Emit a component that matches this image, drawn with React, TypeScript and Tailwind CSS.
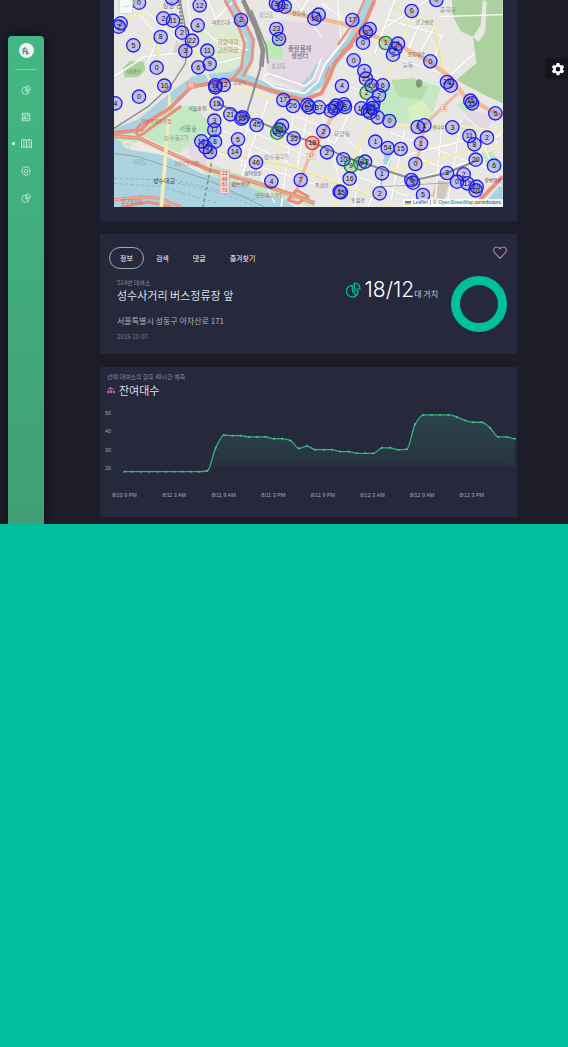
import React from "react";

type Marker = [x: number, y: number, label: string, tone?: "green" | "red"];

const markers: Marker[] = [
  [93, 8, "0"], [192, -6, "5"], [275, 16, "12"], [166, 55, "2"], [195, 62, "11"], [269, 76, "4"],
  [399, 60, "2"], [38, 70, "2"], [32, 80, "2"], [222, 98, "2"], [252, 122, "22"], [158, 111, "8"],
  [76, 136, "5"], [232, 153, "3"], [298, 152, "11"], [271, 202, "6"], [305, 192, "9"],
  [146, 203, "0"], [169, 257, "10"], [93, 290, "0"], [22, 310, "4"], [322, 262, "2"],
  [322, 256, "18"], [347, 255, "12"], [326, 311, "15"], [504, 10, "3"], [511, 15, "6"],
  [530, 20, "12"], [619, 56, "19"], [632, 44, "4"], [733, 60, "17"], [505, 87, "23"],
  [513, 117, "50"], [785, 87, "1"], [774, 97, "0"], [765, 128, "0"], [737, 181, "0"],
  [769, 213, "1"], [774, 236, "25"], [702, 258, "4"], [791, 257, "19"], [776, 278, "2", "green"],
  [824, 256, "6"], [813, 286, "2"], [911, 33, "6"], [985, 0, "0"], [833, 129, "1", "green"],
  [870, 131, "4"], [855, 164, "3"], [862, 146, "8"], [967, 184, "0"], [1028, 257, "5"],
  [1017, 246, "28"], [1087, 302, "11"], [1092, 310, "11"], [1162, 340, "5"], [526, 300, "17"],
  [555, 318, "26"], [598, 315, "15"], [603, 322, "61"], [633, 322, "37"], [669, 332, "23"],
  [680, 324, "3"], [685, 317, "8"], [708, 313, "6"], [711, 321, "0"], [760, 325, "14"],
  [796, 310, "4"], [794, 324, "25"], [780, 332, "8"], [786, 338, "0"], [809, 352, "0"],
  [844, 363, "0"], [367, 343, "21"], [400, 356, "15"], [404, 352, "13"], [319, 362, "3"],
  [319, 390, "17"], [280, 424, "18"], [292, 441, "15"], [321, 425, "8"], [306, 456, "16"],
  [390, 418, "5"], [380, 456, "14"], [446, 375, "45"], [522, 377, "2"], [514, 389, "35"],
  [508, 398, "44", "green"], [557, 415, "35"], [613, 429, "18", "red"], [646, 394, "2"],
  [657, 457, "2"], [706, 478, "10"], [729, 498, "9", "green"], [757, 490, "4", "green"],
  [771, 485, "12"], [725, 536, "16"], [695, 575, "1"], [699, 577, "15"], [444, 487, "46"],
  [490, 544, "4"], [578, 540, "7"], [929, 381, "0"], [949, 376, "1"], [1033, 382, "3"],
  [1084, 408, "11"], [1099, 433, "8"], [1137, 413, "2"], [802, 425, "1"], [839, 444, "54"],
  [878, 447, "15"], [939, 430, "1"], [922, 492, "0"], [822, 520, "1"], [910, 540, "6"],
  [915, 548, "9"], [1017, 519, "3"], [1067, 523, "2"], [1047, 545, "0"], [1078, 550, "12"],
  [1106, 560, "19"], [1103, 571, "10"], [1103, 479, "20"], [1158, 497, "6"], [815, 580, "2"],
  [945, 585, "5"],
];

const minorRoads = [
  "M18 60L120 0M18 230L110 170L210 160M60 0L150 110L120 190M240 0L255 130L305 240M300 0L330 70L380 60",
  "M110 30L220 130M320 120L420 150M330 190L410 170M270 70L340 140M380 0L320 60",
  "M340 390L560 500M370 330L500 610M430 300L400 500M330 460L640 560M480 300L390 560M330 350L620 480",
  "M560 320L520 620M600 340L560 540M640 330L700 560M540 340L690 400M530 370L680 430M530 400L690 460",
  "M640 110L560 0M700 130L690 0M600 0L570 50M730 70L640 10M820 90L960 0M800 160L860 0M700 250L830 300",
  "M840 60L1010 110M900 80L860 170M940 60L900 150M980 80L940 150M1000 110L980 180M850 170L1000 220",
  "M850 400L1180 520M890 390L850 600M1000 390L980 620M1060 360L1020 600M880 470L1080 420M860 560L1100 480",
  "M1000 50L1184 44M1010 240L1100 160M760 440L740 620M700 510L900 590M860 450L780 620M940 480L1170 560",
  "M1110 450L1180 400M1130 440L1180 560M1070 350L1170 430M700 400L780 480M720 350L680 430",
];

const mapLabels: [number, number, string, number, string][] = [
  [190, 24, "성동구", 19, "#777"], [78, 218, "대현산", 15, "#5b8a4a"], [575, 152, "중랑물재", 19, "#665f6e"],
  [575, 175, "생센터", 19, "#665f6e"], [475, 50, "용답동", 16, "#999"], [512, 205, "송정동", 16, "#999"],
  [360, 133, "한양대학", 17, "#b08a50"], [360, 155, "고산자로", 17, "#b08a50"], [268, 330, "서울숲길", 15, "#555"],
  [240, 393, "서울숲", 19, "#6a9b77"], [205, 420, "성수동1가", 18, "#999"], [95, 492, "저자도", 16, "#7aa3c4"],
  [145, 368, "강변북로분기점", 14, "#c0504d"], [235, 495, "고산로분기점", 14, "#c0504d"],
  [168, 550, "성수대교", 18, "#444"], [72, 610, "압구정진입", 14, "#c0504d"], [398, 558, "강변북로", 15, "#7a3030"],
  [435, 526, "성덕정길", 14, "#555"], [505, 478, "성수동2가", 18, "#999"], [485, 590, "영동대교 북단", 15, "#c0504d"],
  [702, 407, "화양동", 18, "#999"], [642, 562, "뚝섬로", 15, "#666"], [750, 605, "동일로", 15, "#666"],
  [900, 202, "능동", 17, "#999"], [1020, 35, "중곡동", 18, "#999"], [950, 72, "긴고랑로", 14, "#666"],
  [991, 388, "광나루", 14, "#666"], [925, 168, "천호대로", 14, "#555"], [572, 46, "천호대", 14, "#666"],
  [340, 73, "마장로1길", 13, "#666"], [395, 252, "살곶이", 14, "#777"], [1155, 545, "강변북로", 14, "#7a3030"],
];

function CityMap() {
  return (
    <svg viewBox="18 0 1167 621" className="block h-auto w-full" role="img" aria-label="지도">
      <rect x="18" width="1167" height="621" fill="#e9e7e4" />
      {/* parks and zones */}
      <g fill="#add19e">
        <path d="M1032 0H1184V310L1130 285L1045 240L1105 190L1095 110L1060 95L1035 50Z" />
        <path d="M45 205L65 183L108 185L112 210L90 232L50 232Z" />
        <path d="M1125 0L1136 5L1132 95L1112 125L1095 110L1118 75Z" fill="#e9e7e4" />
      </g>
      <g fill="#c4e8c4">
        <path d="M835 250L915 232L1000 262L985 300L965 375L860 368L800 330Z" />
        <path d="M190 320L260 318L330 400L290 470L235 440L215 460L110 410L90 390L165 335Z" />
        <path d="M260 80L380 75L425 165L395 230L310 225L290 140Z" fill="#dde9d0" />
        <path d="M465 120L525 125L525 180L475 178Z" fill="#bfe8b8" />
        <path d="M1045 315L1095 290L1110 325L1080 345Z" />
        <path d="M1120 460L1150 455L1184 490V510L1140 500Z" />
        <path d="M30 0L90 0L70 40L35 35Z" />
        <path d="M18 398L60 395L110 410L60 445L18 410Z" />
        <path d="M250 475L330 500L620 600L620 621L520 600L300 530Z" />
      </g>
      <g fill="#e3d8e4">
        <path d="M510 60L700 75L705 110L655 190L640 235L590 275L480 230L475 180L530 175Z" />
        <path d="M240 430L300 405L320 480L300 500L245 465Z" />
        <path d="M1090 330L1155 345L1140 390L1080 400L1050 375Z" />
        <path d="M205 120L240 120L240 165L195 160Z" fill="#ddd0ca" />
      </g>
      <path d="M850 240L915 235L960 260L940 300L870 290Z" fill="#b5dcaa" />
      <path d="M900 320L945 300L975 340L950 372L905 370Z" fill="#d8efc0" />
      <path d="M985 540L1025 548L1010 600L970 590Z" fill="#d0cabd" />
      <path d="M830 455L855 450L845 500L825 490Z" fill="#aad3df" />
      <path d="M924 243l8-6 9 4 3 8-4 11-9 4-7-7Z" fill="#667b66" opacity=".7" />
      <path d="M605 230L625 190L632 198L610 240ZM580 255L600 230L608 236L590 262Z" fill="#a6d2df" />
      {/* rivers */}
      <path d="M18 412L70 450L170 465L280 520L430 565L530 600L560 621H18Z" fill="#aad3df" />
      <path d="M1184 545L1120 621H1184Z" fill="#aad3df" />
      <g fill="none" stroke="#aad3df" strokeLinejoin="round">
        <path d="M18 400L95 370L195 288L260 240L390 225L490 268L580 288L640 245L665 200L730 120L790 0" strokeWidth="26" />
        <path d="M360 0L395 60L430 120L420 190L380 225" strokeWidth="24" />
        <path d="M465 238L500 262L590 280L630 245L650 195L710 120" stroke="#fff" strokeWidth="5" />
        <path d="M465 230L480 220L590 258L615 238L640 175" stroke="#fff" strokeWidth="4" />
      </g>
      <g stroke="#7da0d8" strokeWidth="2" fill="none" strokeDasharray="9 7">
        <path d="M18 535L170 540L340 580L450 621M18 550L160 560L330 610M200 540L450 600" />
      </g>
      {/* streets */}
      <g fill="none" stroke="#fff" strokeWidth="4">
        {minorRoads.map((d) => <path key={d} d={d} />)}
      </g>
      <g fill="none" stroke="#d2cfca" strokeWidth="1">
        {minorRoads.map((d) => <path key={d} d={d} transform="translate(3 3)" />)}
      </g>
      <g fill="none" stroke="#f2edb8" strokeWidth="8" strokeLinejoin="round">
        <path d="M148 105L155 220L185 290L178 400L160 621M40 150L140 112M18 75L110 30M205 40L250 120L305 240L300 510" />
        <path d="M860 20L980 75L1010 215M915 0L890 110L850 200L790 350L725 520L680 621M340 250L540 305L790 325" />
        <path d="M330 455L560 500L800 590L850 621M520 400L495 540M850 378L1070 380L1184 395M820 520L1184 430" />
      </g>
      <g fill="none" stroke="#c9c38a" strokeWidth="1">
        <path d="M143 105L150 220L180 290M855 20L975 75L1005 215M335 455L560 505L800 595M850 383L1070 385" />
      </g>
      <g fill="none" strokeLinejoin="round">
        <path d="M530 35L700 70L880 140L965 185L1030 235L1070 290L1184 350" stroke="#f0bc9b" strokeWidth="13" />
        <path d="M1050 280L1000 325L950 375L925 490M700 300L640 410L600 480L555 600" stroke="#efbda5" strokeWidth="10" />
        <path d="M375 0L405 55L436 120L432 180L405 230M350 0L385 62L410 130L400 205L370 240" stroke="#e49784" strokeWidth="9" />
        <path d="M18 408L95 415L200 465L300 508L450 550L570 590L620 610M18 398L100 390L120 365L185 325L250 260L380 238L480 268L585 300L640 280L665 230L680 190L730 130L770 70L800 0" stroke="#e6917d" strokeWidth="12" />
        <path d="M690 135L745 55L770 0M665 200L650 235M700 150L720 150L735 135" stroke="#e49784" strokeWidth="7" />
        <path d="M18 600L100 590L155 595L220 621M40 621L120 606L190 621M540 600L565 570L600 590L570 610ZM100 370C70 400 90 420 120 390L220 318" stroke="#e6917d" strokeWidth="9" />
        <path d="M18 600L100 590L155 595L220 621M18 408L95 415L200 465L450 550L620 610" stroke="#f7c8b9" strokeWidth="2" />
        <path d="M1184 530L1095 621" stroke="#e6917d" strokeWidth="12" />
        <path d="M60 445C30 425 55 420 75 432L170 465L260 505" stroke="#f1ece4" strokeWidth="5" />
      </g>
      {/* railways */}
      <g fill="none" stroke="#8d8d8d" strokeLinejoin="round">
        <path d="M405 0L445 85L465 150L460 200" strokeWidth="14" />
        <path d="M430 30L475 140L480 190" strokeWidth="5" />
        <path d="M458 200L415 345M330 310L405 345L510 390L615 428L710 470L920 540L1017 519L1110 480" strokeWidth="6" />
        <path d="M215 0L228 60L240 130L232 190L190 255L120 320L18 385" strokeWidth="4" />
        <path d="M215 0L222 75" strokeWidth="10" strokeDasharray="7 4" />
        <path d="M310 490L285 621" strokeWidth="5" strokeDasharray="10 8" />
        <path d="M820 520L820 560L1030 548M18 460L90 470L300 540L470 621" strokeWidth="2" />
      </g>
      <path d="M178 400L160 621" fill="none" stroke="#f2edb8" strokeWidth="11" />
      <g fontFamily="'Noto Sans CJK KR', sans-serif" textAnchor="middle">
        {mapLabels.map(([x, y, text, size, fill]) => (
          <text key={`${x}-${y}`} x={x} y={y} fontSize={size} fill={fill}>{text}</text>
        ))}
      </g>
      {/* road number shields */}
      <g fontFamily="'Liberation Sans', sans-serif" fontSize="14" textAnchor="middle">
        <rect x="336" y="510" width="28" height="70" fill="#f7d3c8" stroke="#d98a76" />
        {["23", "46", "61", "70"].map((n, i) => (
          <text key={n} x="350" y={525 + i * 17} fill="#9c4a40">{n}</text>
        ))}
        <rect x="236" y="247" width="26" height="19" fill="#f39a85" />
        <text x="249" y="262" fill="#fff">61</text>
        <rect x="596" y="460" width="26" height="19" fill="#f9dcc6" stroke="#d9a27e" />
        <text x="609" y="475" fill="#a5673c">47</text>
        <rect x="999" y="315" width="18" height="19" fill="#f9dcc6" stroke="#d9a27e" />
        <text x="1008" y="330" fill="#a5673c">3</text>
      </g>
      <g fontFamily="'Liberation Sans', sans-serif" fontSize="21" textAnchor="middle">
        {markers.map(([x, y, label, tone], i) => {
          const color = tone === "green" ? "#158a2a" : tone === "red" ? "#e23434" : "#2020ee";
          return (
            <g key={i}>
              <circle cx={x} cy={y} r="20" fill={color} fillOpacity=".2" stroke={color} strokeWidth="4" />
              <text x={x} y={y + 7} fill="#151515">{label}</text>
            </g>
          );
        })}
      </g>
    </svg>
  );
}

const levels = [
  18, 18, 18, 18, 18, 18, 18, 18, 18, 18, 18.5, 31, 38, 37.7, 37.7, 37, 37, 37, 36, 36, 35, 30.7, 32,
  30, 30, 30, 29, 29, 28, 28, 28, 31, 31, 30, 30.3, 44, 49, 49, 49, 49, 48, 46, 45, 45, 42, 37, 37, 36,
];

function buildCurve(points: [number, number][]) {
  const slopes = points.map((p, i) => {
    if (i === 0 || i === points.length - 1) return 0;
    const before = (p[1] - points[i - 1][1]) / (p[0] - points[i - 1][0]);
    const after = (points[i + 1][1] - p[1]) / (points[i + 1][0] - p[0]);
    return before * after <= 0 ? 0 : (2 * before * after) / (before + after);
  });
  let d = `M${points[0][0]} ${points[0][1]}`;
  for (let i = 1; i < points.length; i++) {
    const [x0, y0] = points[i - 1];
    const [x1, y1] = points[i];
    const third = (x1 - x0) / 3;
    d += `C${x0 + third} ${y0 + slopes[i - 1] * third} ${x1 - third} ${y1 - slopes[i] * third} ${x1} ${y1}`;
  }
  return d;
}

function ForecastChart() {
  const points = levels.map((v, i): [number, number] => [24.3 + i * 8.31, 69 - (v - 20) * 1.83]);
  const curve = buildCurve(points);
  const times = ["8/10 9 PM", "8/11 3 AM", "8/11 9 AM", "8/11 3 PM", "8/11 9 PM", "8/12 3 AM", "8/12 9 AM", "8/12 3 PM"];
  return (
    <svg viewBox="0 0 417 104" className="block h-auto w-full" role="img" aria-label="잔여대수 예측">
      <defs>
        <linearGradient id="area" x1="0" y1="12" x2="0" y2="72" gradientUnits="userSpaceOnUse">
          <stop offset="0" stopColor="#42b983" stopOpacity=".2" />
          <stop offset=".5" stopColor="#42b983" stopOpacity=".14" />
          <stop offset=".92" stopColor="#42b983" stopOpacity=".07" />
          <stop offset=".93" stopColor="#42b983" stopOpacity="0" />
        </linearGradient>
      </defs>
      <path d={`${curve}V72H24Z`} fill="url(#area)" />
      <path d={curve} fill="none" stroke="#36b07b" strokeWidth="1.3" />
      {points.map(([x, y], i) => <circle key={i} cx={x} cy={y} r="1" fill="#42c78c" />)}
      <g fontFamily="'Liberation Sans', sans-serif" fontSize="5.4" fill="#a8a9b3" textAnchor="middle">
        {[50, 40, 30, 20].map((n) => <text key={n} x="8" y={16 + (50 - n) * 1.83}>{n}</text>)}
        {times.map((t, i) => <text key={t} x={24.5 + i * 49.6} y="98">{t}</text>)}
      </g>
    </svg>
  );
}

const outline = { fill: "none", stroke: "currentColor", strokeWidth: 1.8, strokeLinejoin: "round" as const };

function PieIcon({ className }: { className: string }) {
  return (
    <svg viewBox="0 0 24 24" className={className} {...outline} aria-hidden="true">
      <path d="M11 5A8.800 8.800 0 1 0 19.800 13.500H11Z" />
      <path d="M14 1.500A8.500 8.500 0 0 1 22.500 10.500H14ZM11 13.500L17 20" />
    </svg>
  );
}

function PhotoIcon({ className }: { className: string }) {
  return (
    <svg viewBox="0 0 24 24" className={className} {...outline} aria-hidden="true">
      <path d="M3 3h18v18H3ZM3 7h18M7 11h5v4H7ZM3 18l6-2 4 2 4-3 4 2M15 11h3" />
    </svg>
  );
}

function MapIcon({ className }: { className: string }) {
  return (
    <svg viewBox="0 0 24 24" className={className} {...outline} aria-hidden="true">
      <path d="M1 5l5.500-2L12 5l5.500-2L23 5v16l-5.500-2L12 21l-5.500-2L1 21ZM6.500 3v16M12 5v16M17.500 3v16" />
    </svg>
  );
}

function CogIcon({ className }: { className: string }) {
  return (
    <svg viewBox="0 0 24 24" className={className} {...outline} aria-hidden="true">
      <path d="M10 1.500h4l1 2.700 2.700-1.200 2.900 2.900-1.200 2.700 2.600 1.400v4l-2.600 1.400 1.200 2.700-2.900 2.900-2.700-1.200-1 2.700h-4l-1-2.700L6.300 21l-2.900-2.900 1.200-2.700L2 14v-4l2.600-1.400-1.200-2.700L6.300 3 9 4.200Z" />
      <circle cx="12" cy="12" r="4" />
    </svg>
  );
}

const navItems = [
  { label: "대시보드", Icon: PieIcon, size: "size-[10px]" },
  { label: "이미지", Icon: PhotoIcon, size: "size-[10px]" },
  { label: "지도", Icon: MapIcon, size: "size-[11px]", active: true },
  { label: "설정", Icon: CogIcon, size: "size-[10px]" },
  { label: "통계", Icon: PieIcon, size: "size-[10px]" },
];

function Sidebar() {
  return (
    <aside className="ml-2 mt-9 flex w-9 shrink-0 flex-col items-center rounded-t-sm bg-linear-to-b from-[#42b883] to-[#419f73] pt-[7px] text-[#d7f0e2] shadow-[0_0_8px_#0d0e15]">
      <a href="#home" aria-label="홈" className="flex size-[15px] items-center justify-center rounded-full bg-[#edf5f1]">
        <svg viewBox="0 0 10 10" className="size-2" aria-hidden="true">
          <path d="M1.5 9V2.2L4 1l2 2v6M1.5 5.5H6" fill="none" stroke="#55766c" strokeWidth="1.2" />
          <path d="M5 6l2-1 2.5 4H4Z" fill="#8a8490" />
          <path d="M2 2l2-1v3L2 5Z" fill="#41a97b" />
        </svg>
      </a>
      <hr className="mt-[11px] w-[22px] border-[#83cdab]" />
      <nav className="mt-1.5 w-full">
        <ul>
          {navItems.map(({ label, Icon, size, active }) => (
            <li key={label}>
              <a
                href={`#${label}`}
                aria-label={label}
                aria-current={active ? "page" : undefined}
                className="relative flex h-[27px] items-center justify-center"
              >
                {active && <span className="absolute left-1 size-[3px] rounded-full bg-white" />}
                <Icon className={size} />
              </a>
            </li>
          ))}
        </ul>
      </nav>
    </aside>
  );
}

function MapCard() {
  return (
    <section className="bg-[#25283c] px-3.5 pb-3.5">
      <div className="relative">
        <CityMap />
        <button
          type="button"
          aria-label="축소"
          className="absolute left-[5px] top-0 flex h-3.5 w-3.5 items-center justify-center border border-t-0 border-gray-300 bg-white/80"
        >
          <span className="h-px w-1.5 bg-gray-300" />
        </button>
        <p className="absolute bottom-0 right-0 flex h-2 items-center gap-[2px] bg-white/80 px-[2px] font-['Liberation_Sans',sans-serif] text-[5px] text-[#333]">
          <svg viewBox="0 0 12 8" className="h-1 w-1.5" aria-hidden="true">
            <path fill="#4c7be1" d="M0 0h12v4H0z" />
            <path fill="#ffd500" d="M0 4h12v3H0z" />
            <path fill="#e0bc00" d="M0 7h12v1H0z" />
          </svg>
          <a href="#leaflet" className="text-[#0078a8]">Leaflet</a>
          <span>|</span>
          <span>© <a href="#openstreetmap" className="text-[#0078a8]">OpenStreetMap</a> contributors</span>
        </p>
      </div>
    </section>
  );
}

const tabs = ["정보", "검색", "댓글", "즐겨찾기"];

function StationCard() {
  return (
    <section className="flex h-[120px] justify-between bg-[#26283c]">
      <div className="pl-[9px] pt-[13px]">
        <div role="tablist" className="flex text-[7px] leading-5 text-gray-100">
          {tabs.map((tab, i) => (
            <button
              key={tab}
              type="button"
              role="tab"
              aria-selected={i === 0}
              className={
                i === 0
                  ? "rounded-full border border-[#a5a6b0] px-2.5"
                  : "rounded-full border border-transparent px-[11px]"
              }
            >
              {tab}
            </button>
          ))}
        </div>
        <div className="pl-2">
          <p className="mt-2.5 text-[6px] leading-2 text-[#8a8b98]">514번 대여소</p>
          <h2 className="text-[11px] leading-[17px] text-[#dedee3]">성수사거리 버스정류장 앞</h2>
          <p className="mt-[11px] text-[8px] leading-3 text-[#b0b0b9]">서울특별시 성동구 아차산로 171</p>
          <p className="mt-1.5 text-[6px] leading-2 text-[#81828f]">2015-10-07-</p>
        </div>
      </div>
      <div className="flex flex-col items-end pr-2.5 pt-3">
        <button type="button" aria-label="즐겨찾기 추가" className="text-[#c283b4]">
          <svg viewBox="0 0 24 22" className="h-[13px] w-3.5" {...outline} aria-hidden="true">
            <path d="M12 21L3 11.500C-1.500 6 3 1 7 1.500c2.500 0 4 1.500 5 3.500 1-2 2.500-3.500 5-3.500 4-.5 8.500 4.500 4 10Z" />
          </svg>
        </button>
        <div className="mt-[17px] flex items-start gap-[13px]">
          <div className="flex items-center text-white">
            <PieIcon className="size-4 text-[#00c49f]" />
            <p className="ml-1 flex items-baseline whitespace-nowrap">
              <span className="font-['Inter'] text-[21px] font-light leading-[28px]">18/12</span>
              <span className="text-[8px] leading-3 text-[#d0d0d6]">대 거치</span>
            </p>
          </div>
          <svg viewBox="0 0 56 56" className="size-14" role="img" aria-label="18/12">
            <circle cx="28" cy="28" r="23.500" fill="none" stroke="#00bf9b" strokeWidth="9" />
          </svg>
        </div>
      </div>
    </section>
  );
}

function ForecastCard() {
  return (
    <section className="bg-[#26283c] pb-3.5 pt-1.5">
      <div className="px-[7px]">
        <p className="text-[6px] leading-2 text-[#8a8b98]">선택 대여소의 향후 48시간 예측</p>
        <h2 className="flex items-center gap-1 text-[11px] leading-[18px] text-[#dedee3]">
          <svg viewBox="0 0 16 14" className="h-2 w-2" aria-hidden="true">
            <path d="M1 13V9h3v4ZM6 13V7h3v6ZM12 13V9h3v4Z" fill="#7267b8" stroke="#d27bb4" />
            <path d="M2 6l5-4 6 4M7 2v3" fill="none" stroke="#ec6790" strokeWidth="2" />
          </svg>
          잔여대수
        </h2>
      </div>
      <ForecastChart />
    </section>
  );
}

export default function App() {
  return (
    <div className="min-h-screen bg-[#00bf9c] font-['Noto_Sans_CJK_KR',sans-serif]">
      <div className="relative flex overflow-hidden bg-[#1d1d2a]">
        <Sidebar />
        <main className="ml-14 mr-[51px] flex min-w-0 flex-1 flex-col gap-[13px] pb-[7px]">
          <MapCard />
          <StationCard />
          <ForecastCard />
        </main>
        <button
          type="button"
          aria-label="환경 설정"
          className="absolute right-0 top-[58px] flex h-[21px] w-[23px] items-center justify-center rounded-l-sm bg-[#15151d] pl-0.5 text-white"
        >
          <svg viewBox="0 0 24 24" className="size-4" aria-hidden="true">
            <path
              fill="currentColor"
              fillRule="evenodd"
              d="M10 3h4l.6 2.600 2 1.100 2.600-.8 2 3.500-2 1.800v2l2 1.800-2 3.500-2.600-.8-2 1.100L14 21.500h-4l-.6-2.700-2-1.100-2.600.8-2-3.500 2-1.800v-2l-2-1.800 2-3.500 2.600.8 2-1.100ZM12 8.700a3.500 3.500 0 1 0 0 7 3.500 3.500 0 0 0 0-7Z"
            />
          </svg>
        </button>
      </div>
    </div>
  );
}
